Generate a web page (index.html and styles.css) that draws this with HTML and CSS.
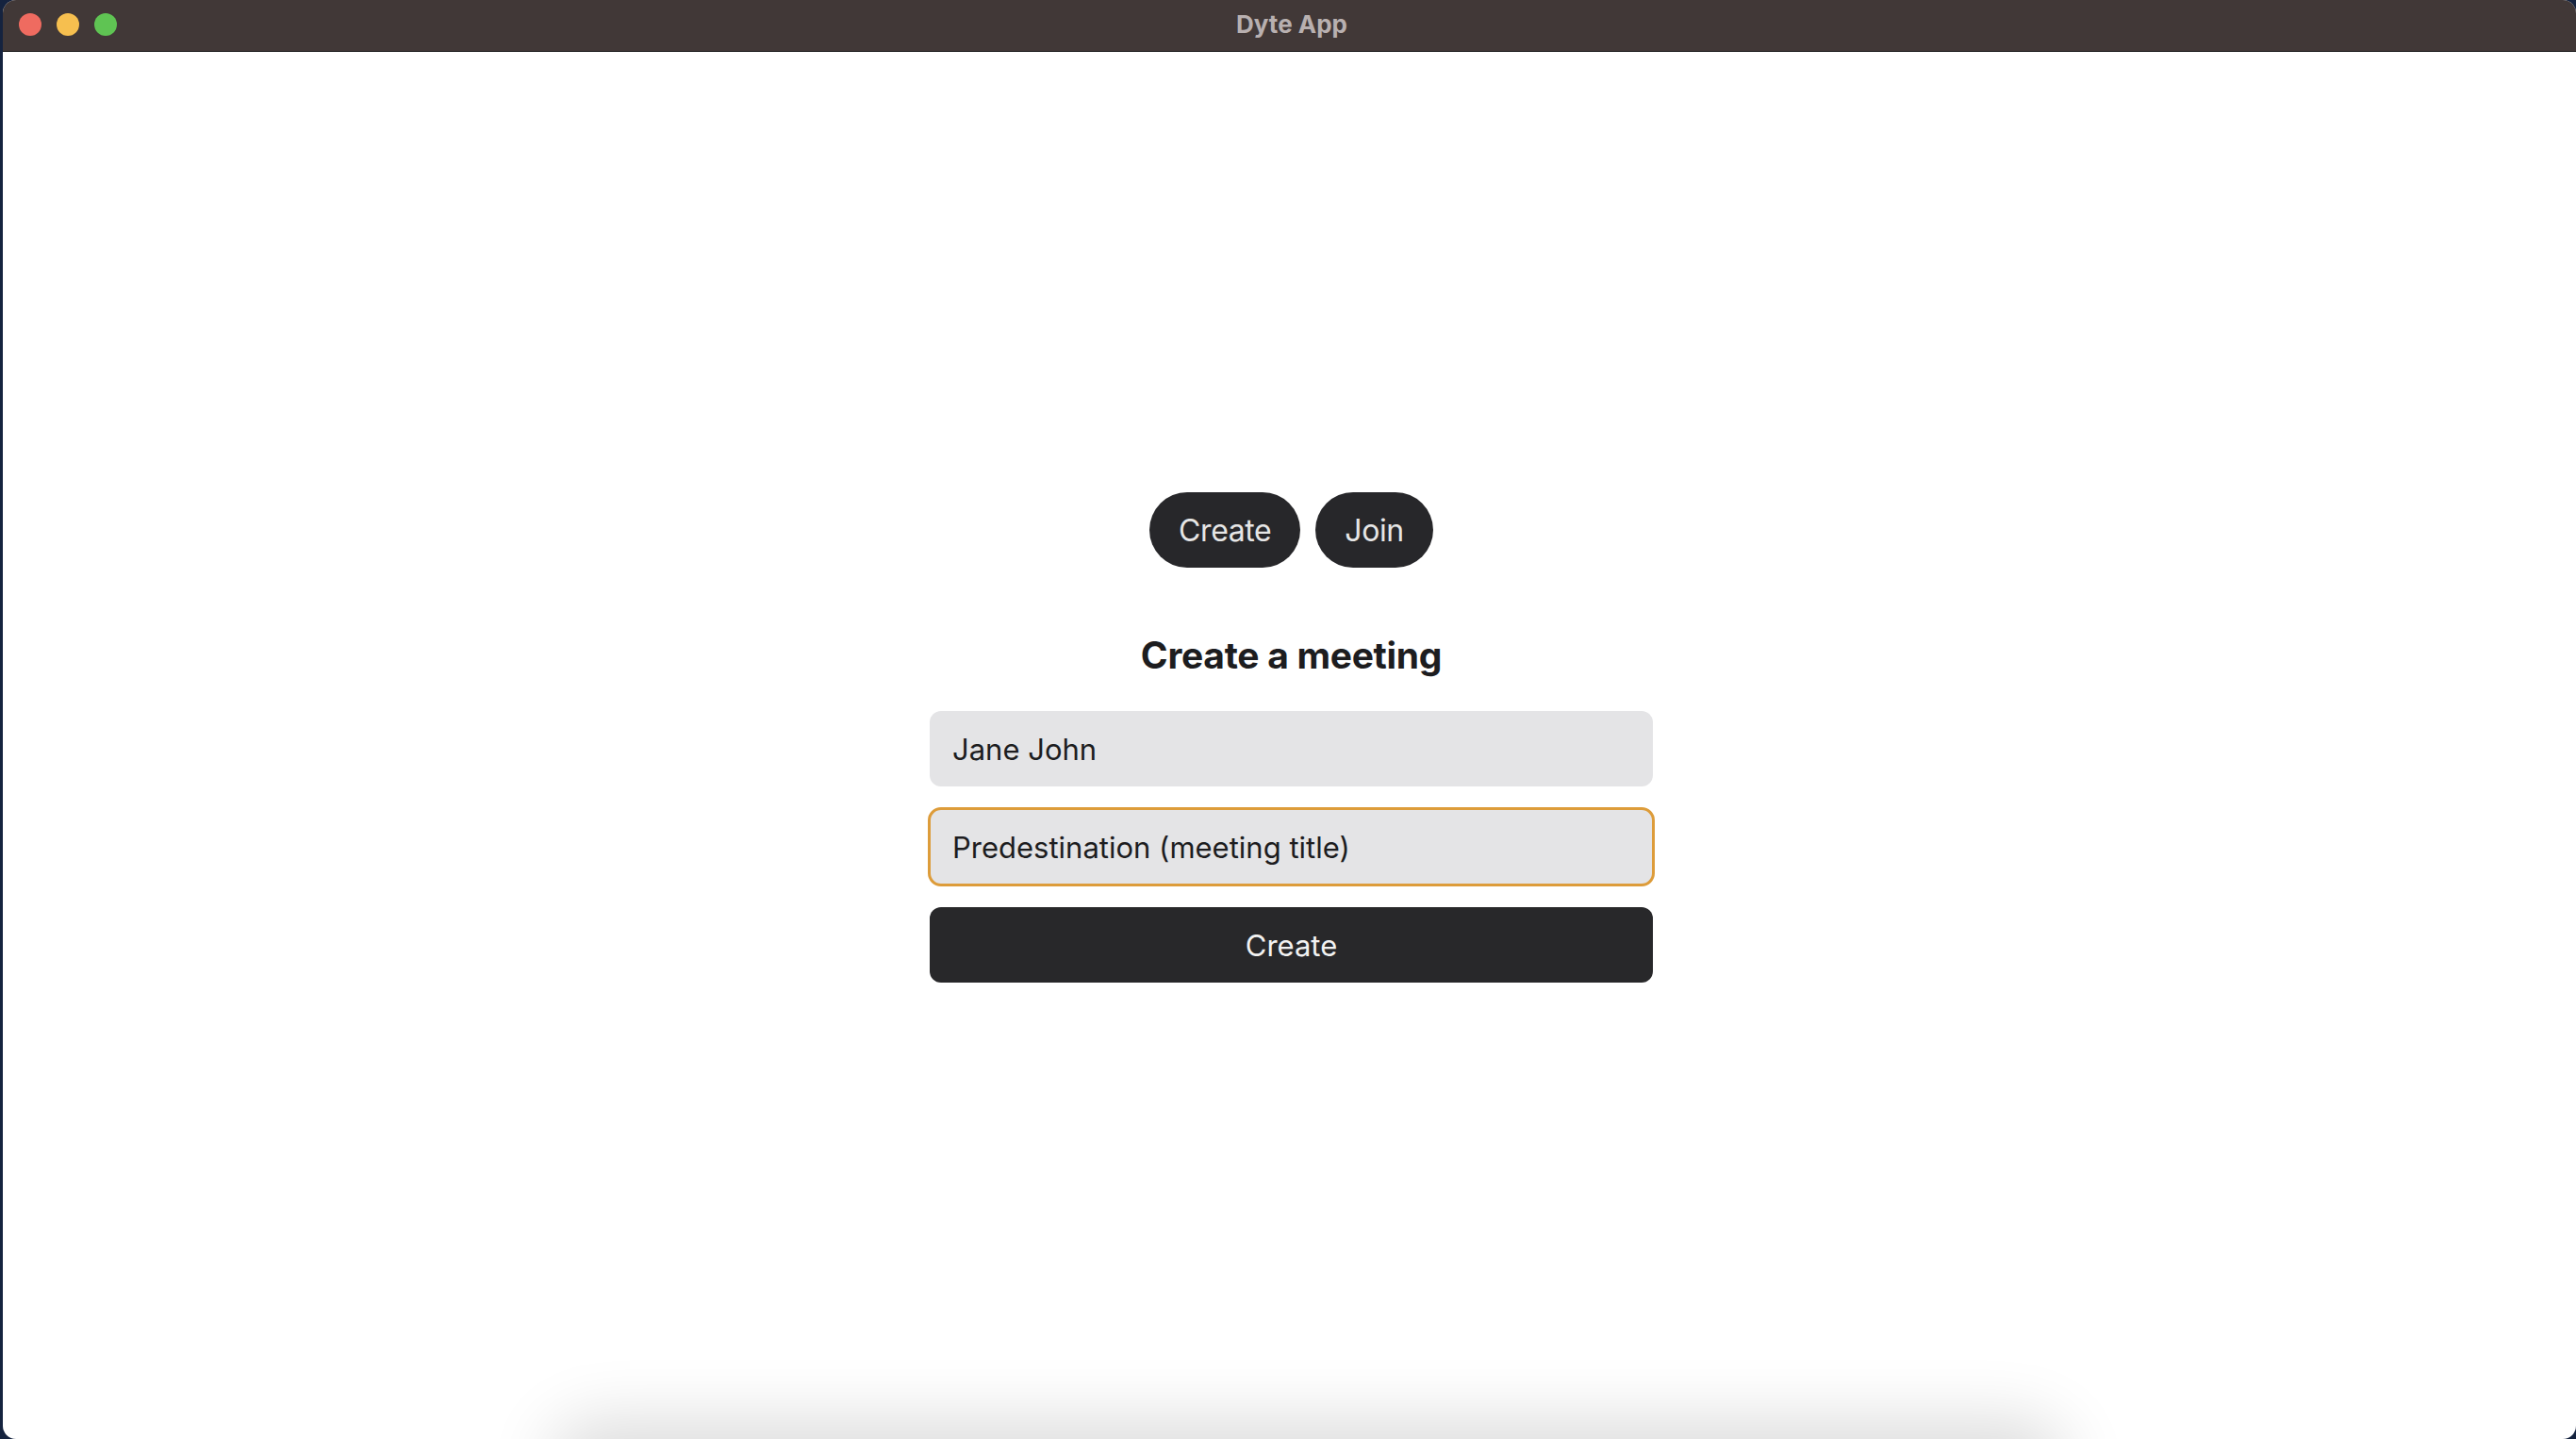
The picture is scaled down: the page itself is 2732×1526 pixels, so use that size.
FILE: index.html
```html
<!DOCTYPE html>
<html lang="en">
<head>
<meta charset="utf-8">
<title>Dyte App</title>
<link rel="stylesheet" href="styles.css">
</head>
<body>
<div class="window">
  <header class="titlebar">
    <div class="lights">
      <span class="light red"></span>
      <span class="light yellow"></span>
      <span class="light green"></span>
    </div>
    <div class="title">Dyte App</div>
  </header>
  <main class="content">
    <div class="tabs">
      <button class="pill">Create</button>
      <button class="pill">Join</button>
    </div>
    <h1 class="heading">Create a meeting</h1>
    <form class="form">
      <input class="field" type="text" value="Jane John">
      <input class="field focused" type="text" value="Predestination (meeting title)">
      <button class="submit" type="button">Create</button>
    </form>
    <div class="dock-shadow"></div>
  </main>
</div>
</body>
</html>
```
FILE: styles.css
```css
* { box-sizing: border-box; }
html, body { margin: 0; padding: 0; }
body {
  width: 2732px;
  height: 1526px;
  overflow: hidden;
  background: #15233f;
  font-family: Inter, "Noto Sans", sans-serif;
}
.window {
  margin-left: 3px;
  height: 1526px;
  display: flex;
  flex-direction: column;
  border-radius: 14px;
  overflow: hidden;
  background: #ffffff;
}
.titlebar {
  position: relative;
  height: 55px;
  flex: none;
  background: #413837;
  border-bottom: 1px solid #141414;
  display: flex;
  align-items: center;
  justify-content: center;
  padding-left: 5px;
}
.lights {
  position: absolute;
  left: 17px;
  top: 14px;
  display: flex;
  gap: 16px;
}
.light {
  width: 24px;
  height: 24px;
  border-radius: 50%;
  display: block;
}
.red { background: #ef6b60; }
.yellow { background: #f6bf4f; }
.green { background: #5fc453; }
.title {
  color: #b8b0b0;
  font-weight: 700;
  font-size: 26px;
  line-height: 30px;
  margin-top: -2px;
}
.content {
  position: relative;
  flex: 1;
  display: flex;
  flex-direction: column;
  align-items: center;
  padding-top: 467px;
  padding-left: 4px;
}
.tabs {
  display: flex;
  gap: 16px;
}
.pill {
  height: 80px;
  padding: 2px 31px 0 31px;
  border: none;
  border-radius: 40px;
  background: #27272a;
  color: #e6e6e6;
  font-family: Inter, "Noto Sans", sans-serif;
  font-size: 32px;
  letter-spacing: -0.4px;
  line-height: 40px;
}
.heading {
  margin: 69px 0 0 0;
  font-size: 39px;
  letter-spacing: -0.3px;
  line-height: 1.21;
  font-weight: 700;
  color: #1d1d1f;
}
.form {
  margin-top: 36px;
  display: flex;
  flex-direction: column;
  gap: 24px;
  width: 767px;
}
.field {
  height: 80px;
  width: 100%;
  border: none;
  border-radius: 12px;
  background: #e4e4e6;
  padding: 0 24px;
  font-family: Inter, "Noto Sans", sans-serif;
  font-size: 31px;
  color: #1d1d1f;
  outline: none;
}
.field.focused {
  outline: 3px solid #dd9c3a;
  outline-offset: -1px;
}
.submit {
  height: 80px;
  width: 100%;
  border: none;
  border-radius: 12px;
  background: #28282a;
  color: #f2f2f2;
  font-family: Inter, "Noto Sans", sans-serif;
  font-size: 31px;
}
.dock-shadow {
  position: absolute;
  left: 600px;
  right: 560px;
  bottom: -60px;
  height: 60px;
  border-radius: 60px;
  box-shadow: 0 0 70px 20px rgba(0, 0, 0, 0.14);
}
```
